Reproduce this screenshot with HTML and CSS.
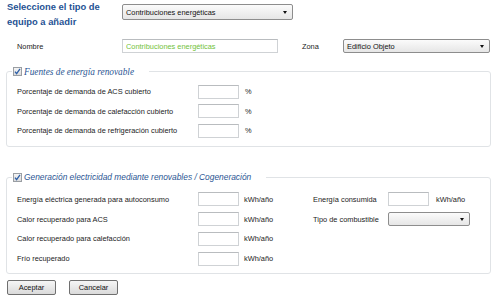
FILE: index.html
```html
<!DOCTYPE html>
<html lang="es">
<head>
    <meta charset="UTF-8">
    <meta name="viewport" content="width=device-width, initial-scale=1.0">
    <title>Añadir equipo</title>
    <link rel="stylesheet" href="styles.css">
</head>
<body>
    <div class="page">
        <div class="top-row">
            <h1 class="title">Seleccione el tipo de<br>equipo a añadir</h1>
            <div class="select select-type">
                <span>Contribuciones energéticas</span>
                <span class="arrow"></span>
            </div>
        </div>

        <div class="name-row">
            <label class="name-label">Nombre</label>
            <input type="text" class="field name-input" value="Contribuciones energéticas">
            <label class="zone-label">Zona</label>
            <div class="select select-zone">
                <span>Edificio Objeto</span>
                <span class="arrow"></span>
            </div>
        </div>

        <fieldset class="group renewables">
            <legend>
                <span class="check"><svg width="9" height="9" viewBox="0 0 9 9"><path d="M2 4.6 L3.6 6.6 L7 1.8" fill="none" stroke="#2d5fa8" stroke-width="1.3"/></svg></span>
                <span class="legend-serif">Fuentes de energía renovable</span>
            </legend>
            <div class="grid">
                <span class="lbl">Porcentaje de demanda de ACS cubierto</span>
                <input type="text" class="field small">
                <span class="unit">%</span>

                <span class="lbl">Porcentaje de demanda de calefacción cubierto</span>
                <input type="text" class="field small">
                <span class="unit">%</span>

                <span class="lbl">Porcentaje de demanda de refrigeración cubierto</span>
                <input type="text" class="field small">
                <span class="unit">%</span>
            </div>
        </fieldset>

        <fieldset class="group generation">
            <legend>
                <span class="check"><svg width="9" height="9" viewBox="0 0 9 9"><path d="M2 4.6 L3.6 6.6 L7 1.8" fill="none" stroke="#2d5fa8" stroke-width="1.3"/></svg></span>
                <span class="legend-sans">Generación electricidad mediante renovables / Cogeneración</span>
            </legend>
            <div class="grid grid-wide">
                <span class="lbl">Energía eléctrica generada para autoconsumo</span>
                <input type="text" class="field small">
                <span class="unit">kWh/año</span>
                <span class="lbl">Energía consumida</span>
                <input type="text" class="field small">
                <span class="unit unit-right">kWh/año</span>

                <span class="lbl">Calor recuperado para ACS</span>
                <input type="text" class="field small">
                <span class="unit">kWh/año</span>
                <span class="lbl">Tipo de combustible</span>
                <div class="select select-fuel">
                    <span></span>
                    <span class="arrow"></span>
                </div>

                <span class="lbl">Calor recuperado para calefacción</span>
                <input type="text" class="field small">
                <span class="unit">kWh/año</span>
                <span></span><span></span><span></span>

                <span class="lbl">Frío recuperado</span>
                <input type="text" class="field small">
                <span class="unit">kWh/año</span>
                <span></span><span></span><span></span>
            </div>
        </fieldset>

        <div class="actions">
            <button class="btn">Aceptar</button>
            <button class="btn">Cancelar</button>
        </div>
    </div>
</body>
</html>
```

FILE: styles.css
```css
body {
    margin: 0;
    padding: 0;
    background-color: #ffffff;
    font-family: "Liberation Sans", Arial, sans-serif;
    font-size: 7.4px;
    color: #222222;
}
.page {
    width: 500px;
    padding: 0 10px 0 6px;
    box-sizing: border-box;
}
.top-row {
    display: flex;
    align-items: flex-start;
    height: 30px;
}
.title {
    margin: 0;
    width: 115px;
    padding-left: 1px;
    font-size: 9.4px;
    line-height: 14.5px;
    color: #1f5394;
    font-weight: bold;
}
.select {
    display: flex;
    align-items: center;
    justify-content: space-between;
    box-sizing: border-box;
    border: 1px solid #8d8d8d;
    border-radius: 2px;
    background: linear-gradient(#fbfbfb, #e6e6e6);
    padding: 0 5px 0 3px;
    color: #111111;
}
.arrow {
    width: 0;
    height: 0;
    border-left: 2.5px solid transparent;
    border-right: 2.5px solid transparent;
    border-top: 3px solid #111111;
}
.select-type {
    margin-top: 4px;
    width: 171px;
    height: 16px;
}
.name-row {
    display: flex;
    align-items: center;
    margin-top: 9px;
    height: 14px;
}
.name-label {
    width: 105px;
    padding-left: 11px;
}
.field {
    box-sizing: border-box;
    border: 1px solid #cfd2d5;
    border-top-color: #b9bcbf;
    background: #ffffff;
    margin: 0;
    padding: 0 3px;
    font-family: inherit;
    font-size: 7.4px;
    height: 14px;
    outline: none;
}
.name-input {
    width: 156px;
    color: #72c23a;
}
.zone-label {
    margin-left: 24px;
    width: 41px;
}
.select-zone {
    width: 147px;
    height: 14px;
}
.group {
    margin: 13px 0 0 0;
    padding: 0 0 5px 0;
    border: 1px solid #e0e3e6;
    border-radius: 3px;
    width: 485px;
    box-sizing: border-box;
}
.group legend {
    margin-left: 5px;
    padding: 0 15px 0 1px;
    display: flex;
    align-items: center;
    height: 11px;
    color: #2a5593;
}
.check {
    display: inline-block;
    width: 9px;
    height: 9px;
    box-sizing: border-box;
    border: 1px solid #9a9ea3;
    background: linear-gradient(#f4f4f4, #dcdcdc);
    margin-right: 2px;
    position: relative;
}
.check svg {
    position: absolute;
    left: -1px;
    top: -1px;
}
.legend-serif {
    font-family: "Liberation Serif", "Times New Roman", serif;
    font-style: italic;
    font-size: 9.3px;
}
.legend-sans {
    font-style: italic;
    font-size: 8.4px;
}
.grid {
    display: grid;
    grid-template-columns: 181px 41px auto;
    grid-auto-rows: 19.5px;
    align-items: center;
    padding: 5px 0 0 10px;
}
.grid-wide {
    grid-template-columns: 181px 41px 74px 75px 41px auto;
    grid-auto-rows: 19.8px;
    padding-top: 7px;
}
.small {
    width: 41px;
}
.unit {
    padding-left: 6px;
}
.grid-wide .unit {
    padding-left: 5px;
}
.grid-wide .unit-right {
    padding-left: 7px;
}
.generation {
    margin-top: 25px;
    padding-bottom: 4px;
}
.select-fuel {
    grid-column: span 2;
    width: 82px;
    height: 14px;
}
.actions {
    display: flex;
    gap: 13px;
    margin-top: 6px;
    padding-left: 1px;
}
.btn {
    width: 49px;
    height: 15px;
    padding: 0;
    border: 1px solid #6f6f6f;
    border-radius: 2px;
    background: linear-gradient(#f6f6f6, #dadada);
    font-family: inherit;
    font-size: 7.4px;
    color: #111111;
    cursor: pointer;
}
```
